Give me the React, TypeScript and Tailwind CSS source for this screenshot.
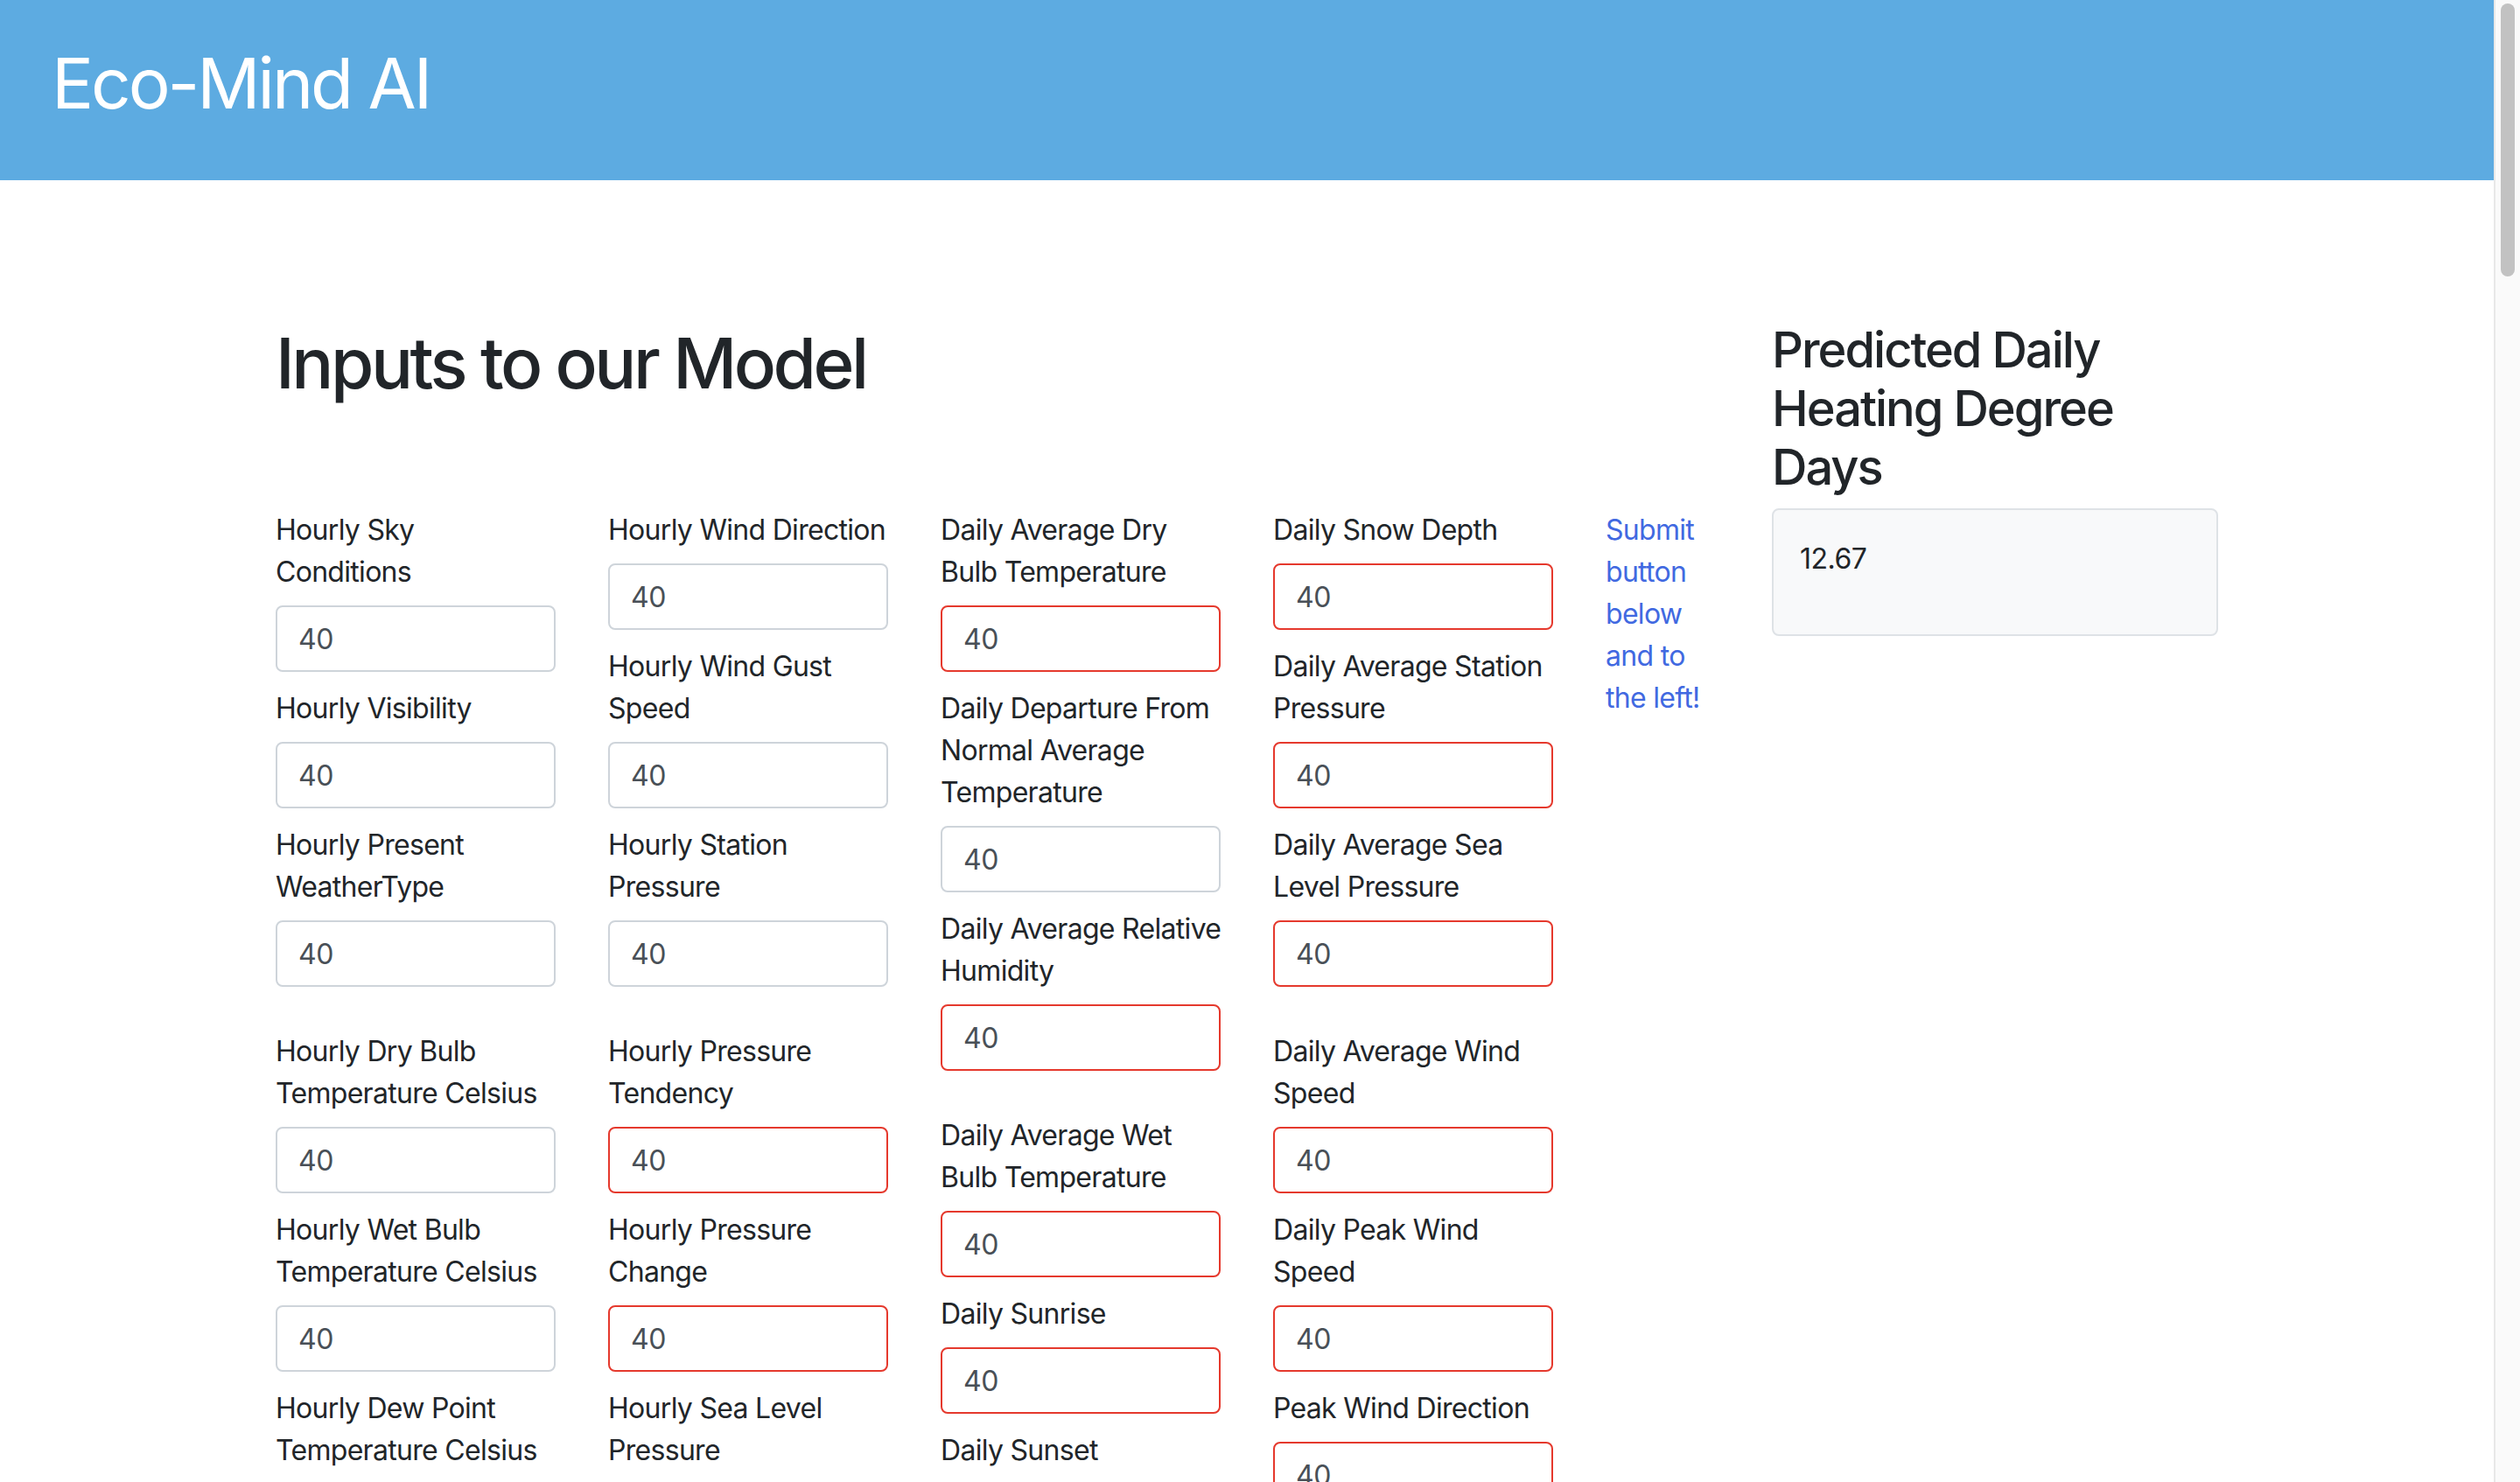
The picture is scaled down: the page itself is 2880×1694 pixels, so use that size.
import React from "react";

type Field = { lines: string[]; red?: boolean };

const columns: Field[][][] = [
  [
    [
      { lines: ["Hourly Sky", "Conditions"] },
      { lines: ["Hourly Visibility"] },
      { lines: ["Hourly Present", "WeatherType"] },
    ],
    [
      { lines: ["Hourly Dry Bulb", "Temperature Celsius"] },
      { lines: ["Hourly Wet Bulb", "Temperature Celsius"] },
      { lines: ["Hourly Dew Point", "Temperature Celsius"] },
    ],
  ],
  [
    [
      { lines: ["Hourly Wind Direction"] },
      { lines: ["Hourly Wind Gust", "Speed"] },
      { lines: ["Hourly Station", "Pressure"] },
    ],
    [
      { lines: ["Hourly Pressure", "Tendency"], red: true },
      { lines: ["Hourly Pressure", "Change"], red: true },
      { lines: ["Hourly Sea Level", "Pressure"], red: true },
    ],
  ],
  [
    [
      { lines: ["Daily Average Dry", "Bulb Temperature"], red: true },
      { lines: ["Daily Departure From", "Normal Average", "Temperature"] },
      { lines: ["Daily Average Relative", "Humidity"], red: true },
    ],
    [
      { lines: ["Daily Average Wet", "Bulb Temperature"], red: true },
      { lines: ["Daily Sunrise"], red: true },
      { lines: ["Daily Sunset"], red: true },
    ],
  ],
  [
    [
      { lines: ["Daily Snow Depth"], red: true },
      { lines: ["Daily Average Station", "Pressure"], red: true },
      { lines: ["Daily Average Sea", "Level Pressure"], red: true },
    ],
    [
      { lines: ["Daily Average Wind", "Speed"], red: true },
      { lines: ["Daily Peak Wind", "Speed"], red: true },
      { lines: ["Peak Wind Direction"], red: true },
    ],
  ],
];

function Lines({ lines }: { lines: string[] }) {
  return (
    <>
      {lines.map((l, i) => (
        <span key={i} className="block whitespace-nowrap">
          {l}
        </span>
      ))}
    </>
  );
}

function FormField({ lines, red }: Field) {
  return (
    <div className="flex flex-col gap-[16px]">
      <label className="block pt-[2px] -mb-[2px] text-[32px] leading-[48px] tracking-[-0.7px] text-[#212529]">
        <Lines lines={lines} />
      </label>
      <input
        type="text"
        defaultValue="40"
        className={
          "block w-full h-[76px] rounded-[8px] border-2 bg-white px-[24px] text-[32px] leading-[48px] tracking-[-0.4px] text-[#495057] outline-none " +
          (red ? "border-[#e5392d]" : "border-[#ced4da]")
        }
      />
    </div>
  );
}

export default function App() {
  return (
    <div
      className="flex h-[1694px] w-full overflow-hidden bg-white"
      style={{ fontFamily: "Inter, 'Noto Sans', sans-serif" }}
    >
      <div className="flex-1 min-w-0 overflow-hidden">
        <header className="h-[206px] bg-[#5dabe1] pl-[59px] pt-[47px]">
          <h1 className="text-[80px] leading-[96px] font-normal tracking-[-3.05px] text-white">Eco-Mind AI</h1>
        </header>
        <div className="mx-auto w-[2280px] px-[30px]">
          <div className="flex gap-[60px]">
            <div className="w-[1650px]">
              <h1 className="mt-[161px] text-[80px] leading-[96px] font-medium tracking-[-3.5px] text-[#212529]">
                Inputs to our Model
              </h1>
              <div className="mt-[117px] flex gap-[60px]">
                {columns.map((groups, ci) => (
                  <div key={ci} className="flex w-[320px] shrink-0 flex-col gap-[48px]">
                    {groups.map((g, gi) => (
                      <div key={gi} className="flex flex-col gap-[16px]">
                        {g.map((f) => (
                          <FormField key={f.lines.join(" ")} {...f} />
                        ))}
                      </div>
                    ))}
                  </div>
                ))}
                <div className="w-[130px] shrink-0 pt-[2px]">
                  <a href="#" className="block text-[32px] leading-[48px] tracking-[-0.7px] text-[#4169e1]">
                    <Lines lines={["Submit", "button", "below", "and to", "the left!"]} />
                  </a>
                </div>
              </div>
            </div>
            <div className="w-[510px]">
              <h3 className="mt-[161px] mb-[12px] text-[56px] leading-[67.2px] font-medium tracking-[-2px] text-[#212529]">
                <Lines lines={["Predicted Daily", "Heating Degree", "Days"]} />
              </h3>
              <div className="h-[146px] rounded-[8px] border-2 border-[#dee2e6] bg-[#f8f9fa] pl-[30px] pt-[32px] text-[32px] leading-[48px] tracking-[-0.5px] text-[#212529]">
                12.67
              </div>
            </div>
          </div>
        </div>
      </div>
      <div className="w-[30px] shrink-0 border-l-2 border-[#e8e8e8] bg-[#fafafa] pl-[6px] pt-[4px]">
        <div className="h-[312px] w-[16px] rounded-full bg-[#c2c2c2]" />
      </div>
    </div>
  );
}
